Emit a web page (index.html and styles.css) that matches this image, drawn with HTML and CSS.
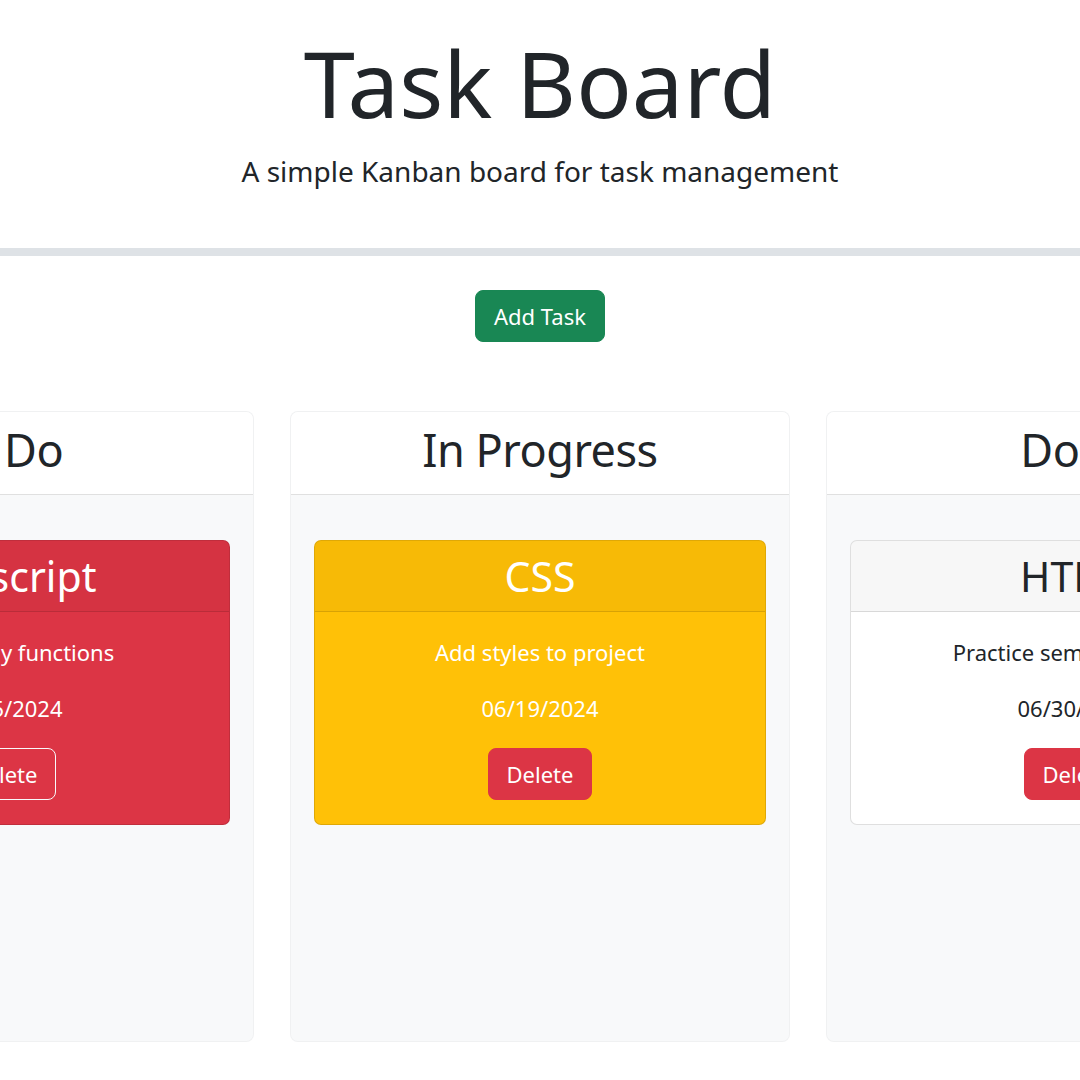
FILE: index.html
```html
<!DOCTYPE html>
<html lang="en">
<head>
<meta charset="utf-8">
<title>Task Board</title>
<link rel="stylesheet" href="styles.css">
</head>
<body>
<header class="hero">
  <h1 class="hero-title">Task Board</h1>
  <p class="hero-lead">A simple Kanban board for task management</p>
</header>
<main class="main">
  <div class="actions">
    <button class="btn btn-success" type="button">Add Task</button>
  </div>
  <section class="board">
    <div class="lane">
      <div class="lane-header"><h2 class="lane-title">To Do</h2></div>
      <div class="lane-body">
        <div class="task task-danger">
          <div class="task-header"><h3 class="task-title">Javascript</h3></div>
          <div class="task-body">
            <p class="task-text">Learn array functions</p>
            <p class="task-text">06/25/2024</p>
            <button class="btn btn-danger btn-outlined" type="button">Delete</button>
          </div>
        </div>
      </div>
    </div>
    <div class="lane">
      <div class="lane-header"><h2 class="lane-title">In Progress</h2></div>
      <div class="lane-body">
        <div class="task task-warning">
          <div class="task-header"><h3 class="task-title">CSS</h3></div>
          <div class="task-body">
            <p class="task-text">Add styles to project</p>
            <p class="task-text">06/19/2024</p>
            <button class="btn btn-danger" type="button">Delete</button>
          </div>
        </div>
      </div>
    </div>
    <div class="lane">
      <div class="lane-header"><h2 class="lane-title">Done</h2></div>
      <div class="lane-body">
        <div class="task task-light">
          <div class="task-header"><h3 class="task-title">HTML</h3></div>
          <div class="task-body">
            <p class="task-text">Practice semantic HTML</p>
            <p class="task-text">06/30/2024</p>
            <button class="btn btn-danger" type="button">Delete</button>
          </div>
        </div>
      </div>
    </div>
  </section>
</main>
</body>
</html>
```
FILE: styles.css
```css
* { box-sizing: border-box; }

html, body {
  margin: 0;
  padding: 0;
  background: #ffffff;
  overflow: hidden;
}

body {
  font-family: "Noto Sans", "Open Sans", "Liberation Sans", sans-serif;
  color: #212529;
  width: 1080px;
  height: 1080px;
}

.hero {
  text-align: center;
  padding-top: 28px;
  height: 256px;
  border-bottom: 8px solid #dee2e6;
}

.hero-title {
  margin: 0;
  font-size: 92px;
  font-weight: 400;
  line-height: 1.2;
}

.hero-lead {
  margin: 12px 0 0;
  font-size: 28px;
  font-weight: 400;
  line-height: 1.5;
}

.main {
  padding-top: 34px;
}

.actions {
  display: flex;
  justify-content: center;
}

.btn {
  font-family: inherit;
  font-size: 22px;
  line-height: 32px;
  padding: 9px 18px;
  border-radius: 8px;
  border: 1px solid transparent;
  color: #ffffff;
  cursor: pointer;
}

.btn-success {
  background: #198754;
  border-color: #198754;
}

.btn-danger {
  background: #dc3545;
  border-color: #dc3545;
}

.btn-outlined {
  border-color: #f8f9fa;
}

.board {
  margin-top: 69px;
  display: flex;
  justify-content: center;
  gap: 36px;
}

.lane {
  flex: 0 0 500px;
  width: 500px;
  height: 631px;
  display: flex;
  flex-direction: column;
  border: 1px solid rgba(0, 0, 0, 0.03);
  border-radius: 8px;
  overflow: hidden;
  background: #f8f9fa;
}

.lane-header {
  background: #ffffff;
  border-bottom: 1px solid rgba(0, 0, 0, 0.12);
  padding: 11px 16px 17px;
  text-align: center;
}

.lane-title {
  margin: 0;
  font-size: 45px;
  font-weight: 400;
  line-height: 54px;
  letter-spacing: -0.5px;
}

.lane-body {
  flex: 1;
  padding: 45px 23px;
}

.task {
  border: 1px solid rgba(0, 0, 0, 0.125);
  border-radius: 7px;
  overflow: hidden;
  text-align: center;
}

.task-header {
  padding: 10.5px 16px;
  background: rgba(0, 0, 0, 0.03);
  border-bottom: 1px solid rgba(0, 0, 0, 0.125);
}

.task-title {
  margin: 0;
  font-size: 41px;
  font-weight: 400;
  line-height: 1.2;
}

.task-body {
  padding: 24px 21px;
}

.task-text {
  margin: 0 0 24px;
  font-size: 22px;
  line-height: 32px;
}

.task-danger {
  background: #dc3545;
  color: #ffffff;
}

.task-warning {
  background: #ffc107;
  color: #ffffff;
}

.task-light {
  background: #ffffff;
  color: #212529;
}
```
